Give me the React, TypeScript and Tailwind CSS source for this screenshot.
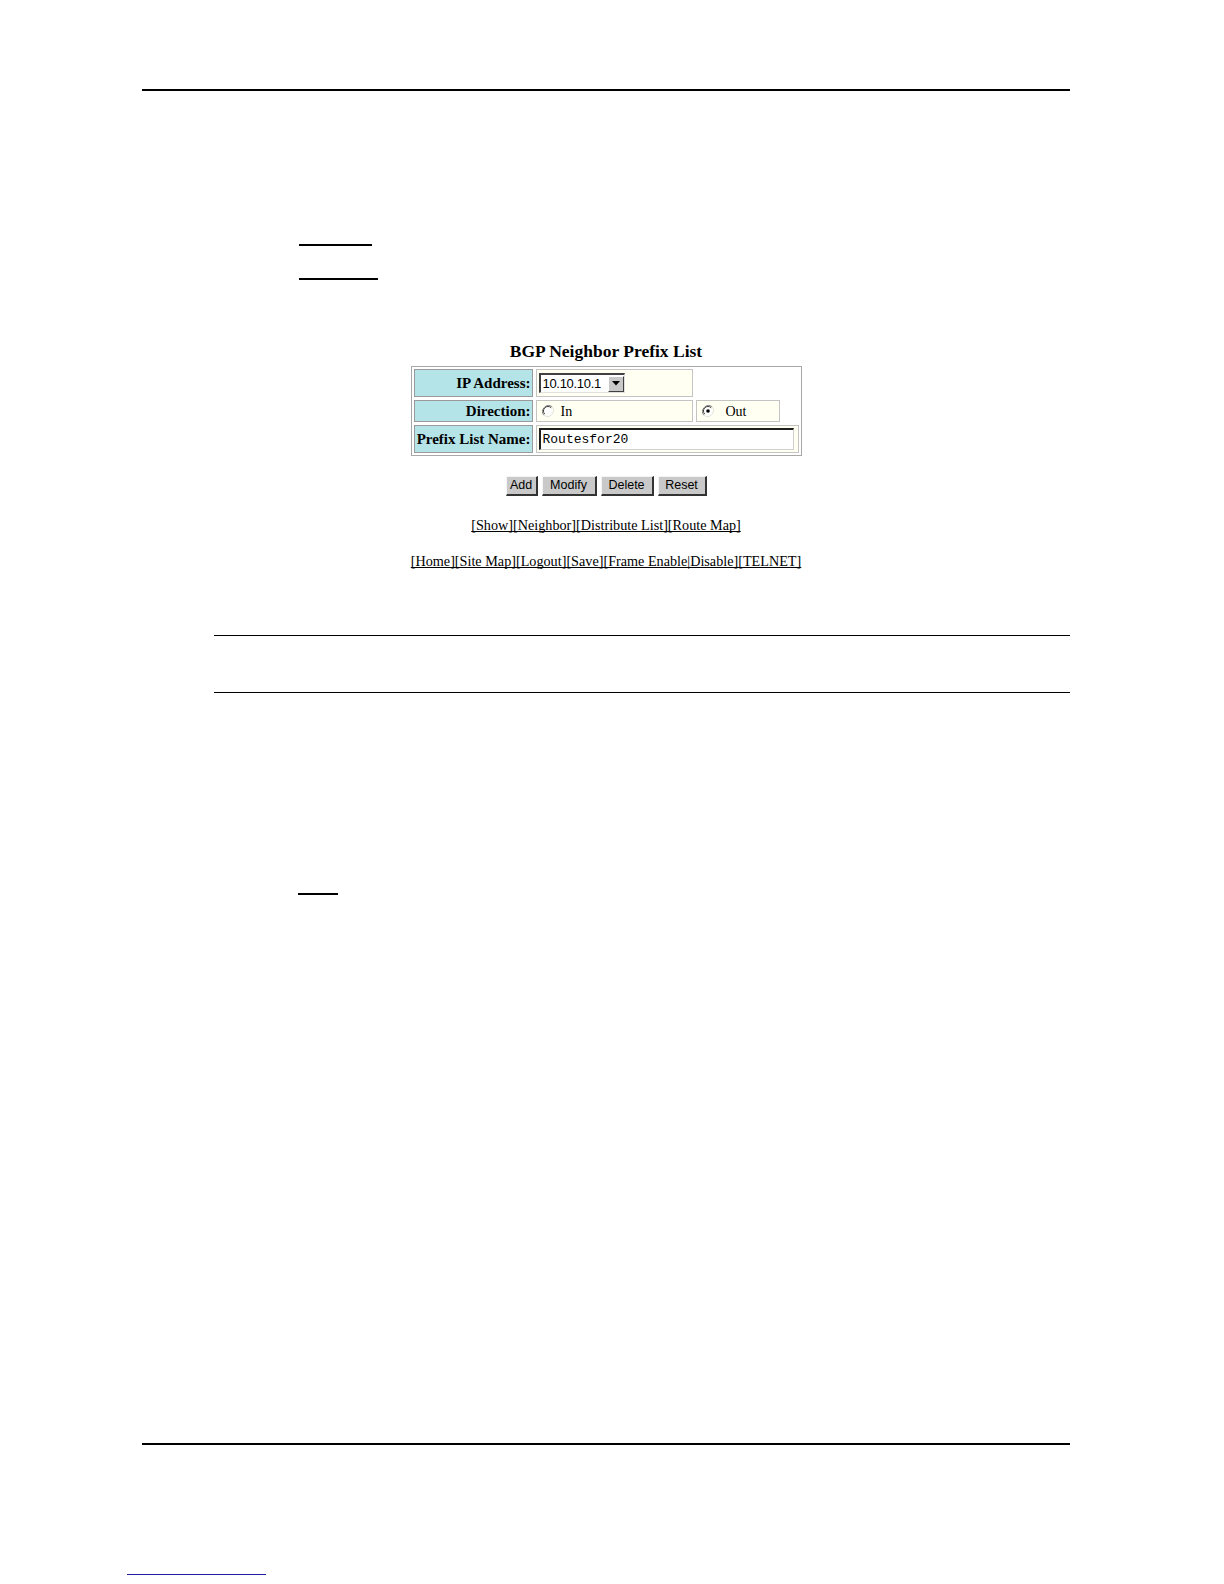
import React from "react";

function Radio({ checked }: { checked?: boolean }) {
  return (
    <svg width="12" height="12" viewBox="0 0 12 12" className="shrink-0">
      <path d="M10.2 1.8 A6 6 0 0 0 1.8 10.2" fill="none" stroke="#808080" strokeWidth="1" />
      <path d="M1.8 10.2 A6 6 0 0 0 10.2 1.8" fill="none" stroke="#e0e0e0" strokeWidth="1" />
      <circle cx="6" cy="6" r="4.6" fill="#ffffff" />
      <path d="M9.2 2.8 A4.5 4.5 0 0 0 2.8 9.2" fill="none" stroke="#404040" strokeWidth="1" />
      {checked && <circle cx="6" cy="6" r="1.8" fill="#000000" />}
    </svg>
  );
}

function Btn({ label, w }: { label: string; w: string }) {
  return (
    <div
      className={`${w} h-[20px] bg-[#c9c9c9] border-t border-l border-t-[#f4f4f4] border-l-[#f4f4f4] border-r-2 border-b-2 border-r-[#333333] border-b-[#333333] flex items-center justify-center font-['Liberation_Sans'] text-[12.5px] text-black leading-none`}
    >
      {label}
    </div>
  );
}

export default function App() {
  return (
    <div className="w-[1224px] h-[1584px] bg-white flex flex-col font-['Liberation_Serif',serif] text-black overflow-hidden">
      <div className="mt-[89px] ml-[142px] w-[928px] h-[2px] bg-black" />
      <div className="mt-[153px] ml-[299px] w-[73px] h-[2px] bg-black" />
      <div className="mt-[32px] ml-[299px] w-[79px] h-[2px] bg-black" />

      <div className="ml-[142px] w-[928px] flex flex-col items-center">
        <div className="mt-[61px] h-[20px] text-[17.5px] leading-[20px] font-bold">BGP Neighbor Prefix List</div>

        <div className="mt-[5px] w-[391px] border border-[#a8a8a8] p-[2px] grid grid-cols-[119px_157px_84px_16px] grid-rows-[28px_22px_28px] gap-[3px]">
          <div className="bg-[#b4e4e8] border border-[#9a9a9a] flex items-center justify-end pr-[1px] text-[15px] font-bold">IP Address:</div>
          <div className="bg-[#fffff2] border border-[#c4c4c4] flex items-center pl-[2px]">
            <div className="w-[86px] h-[20px] bg-white border-t-2 border-l-2 border-t-[#404040] border-l-[#404040] border-r border-b border-r-[#e0e0e0] border-b-[#e0e0e0] flex items-center justify-between">
              <span className="pl-[2px] font-['Liberation_Sans'] text-[13px] leading-none tracking-[-0.3px]">10.10.10.1</span>
              <div className="w-[16px] h-[16px] bg-[#c9c9c9] border-t border-l border-t-white border-l-white border-r border-b border-r-[#404040] border-b-[#404040] flex items-center justify-center">
                <svg width="8" height="5" viewBox="0 0 8 5"><path d="M0 0 H8 L4 4.5 Z" fill="#000" /></svg>
              </div>
            </div>
          </div>
          <div className="col-span-2" />

          <div className="bg-[#b4e4e8] border border-[#9a9a9a] flex items-center justify-end pr-[1px] text-[15px] font-bold">Direction:</div>
          <div className="bg-[#fffff2] border border-[#c4c4c4] flex items-center pl-[5px] gap-[7px] text-[14px]">
            <Radio />
            <span>In</span>
          </div>
          <div className="bg-[#fffff2] border border-[#c4c4c4] flex items-center pl-[5px] gap-[12px] text-[14px]">
            <Radio checked />
            <span>Out</span>
          </div>
          <div />

          <div className="bg-[#b4e4e8] border border-[#9a9a9a] flex items-center justify-end pr-[1px] text-[15px] font-bold whitespace-nowrap">Prefix List Name:</div>
          <div className="col-span-3 bg-[#fffff2] border border-[#c4c4c4] flex items-center pl-[2px] pr-[4px]">
            <div className="w-full h-[22px] bg-white border-t-2 border-l-2 border-t-[#202020] border-l-[#202020] border-r border-b border-r-[#d0d0d0] border-b-[#d0d0d0] flex items-center pl-[2px] font-['Liberation_Mono'] text-[13px] leading-none">
              Routesfor20
            </div>
          </div>
        </div>

        <div className="mt-[20px] flex gap-[4px]">
          <Btn label="Add" w="w-[32px]" />
          <Btn label="Modify" w="w-[55px]" />
          <Btn label="Delete" w="w-[53px]" />
          <Btn label="Reset" w="w-[49px]" />
        </div>

        <div className="mt-[21px] h-[16px] text-[14.2px] leading-[16px] underline [text-decoration-skip-ink:none] whitespace-nowrap">
          [Show][Neighbor][Distribute List][Route Map]
        </div>

        <div className="mt-[20px] h-[16px] text-[14.2px] leading-[16px] underline [text-decoration-skip-ink:none] whitespace-nowrap">
          [Home][Site Map][Logout][Save][Frame Enable|Disable][TELNET]
        </div>
      </div>

      <div className="mt-[66px] ml-[214px] w-[856px] h-px bg-black" />
      <div className="mt-[56px] ml-[214px] w-[856px] h-px bg-black" />
      <div className="mt-[200px] ml-[298px] w-[40px] h-[2px] bg-black" />
      <div className="mt-[548px] ml-[142px] w-[928px] h-[2px] bg-black" />
      <div className="mt-[129px] ml-[127px] w-[139px] h-px bg-[#2020a0]" />
    </div>
  );
}
